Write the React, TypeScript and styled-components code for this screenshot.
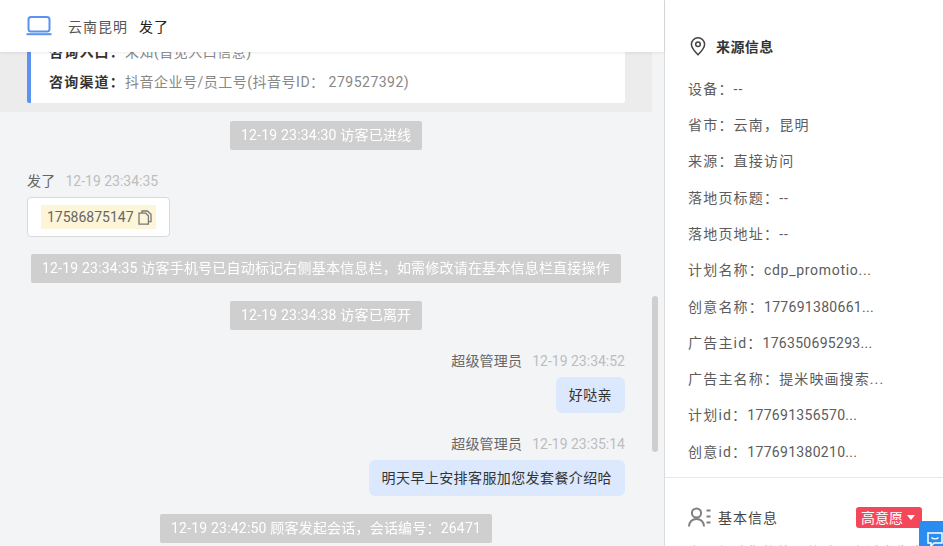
import { createGlobalStyle, styled } from "styled-components";

const GlobalStyle = createGlobalStyle`
  html, body {
    margin: 0;
    height: 100%;
    overflow: hidden;
  }
  body {
    font-family: Roboto, "Noto Sans CJK SC", sans-serif;
    font-size: 14px;
    color: #333;
    background: #fff;
  }
`;

const sourceRows = [
  { label: "设备：", value: "--", spacing: 1 },
  { label: "省市：", value: "云南，昆明", spacing: 1.2 },
  { label: "来源：", value: "直接访问", spacing: 1.2 },
  { label: "落地页标题：", value: "--", spacing: 1 },
  { label: "落地页地址：", value: "--", spacing: 1 },
  { label: "计划名称：", value: "cdp_promotio...", spacing: 0.7 },
  { label: "创意名称：", value: "177691380661...", spacing: 0.3 },
  { label: "广告主id：", value: "176350695293...", spacing: 0.3 },
  { label: "广告主名称：", value: "提米映画搜索...", spacing: 1.1 },
  { label: "计划id：", value: "177691356570...", spacing: 0.3 },
  { label: "创意id：", value: "177691380210...", spacing: 0.3 },
];

export default function App() {
  return (
    <>
      <GlobalStyle />
      <Page>
        <ChatColumn>
          <ChatHeader>
            <svg width="26" height="20" viewBox="0 0 26 20" fill="none">
              <rect x="2.5" y="1" width="21" height="14.5" rx="2.5" stroke="#5b93ee" strokeWidth="2" />
              <rect x="0.5" y="17.2" width="25" height="2" fill="#5b93ee" />
            </svg>
            <HeaderLocation>云南昆明</HeaderLocation>
            <HeaderName>发了</HeaderName>
          </ChatHeader>
          <ChatScroll>
            <NoticeBand>
              <NoticeCard>
                <NoticeLine>
                  <b>咨询入口：</b>未知(首见入口信息)
                </NoticeLine>
                <NoticeLine>
                  <b>咨询渠道：</b>抖音企业号/员工号(抖音号ID： 279527392)
                </NoticeLine>
              </NoticeCard>
            </NoticeBand>
            <Messages>
              <SystemNote>12-19 23:34:30 访客已进线</SystemNote>
              <MessageGroup $top={21}>
                <MessageMeta>
                  发了<MetaTime>12-19 23:34:35</MetaTime>
                </MessageMeta>
                <PhoneCard>
                  <PhoneMark>
                    17586875147
                    <svg width="14" height="15" viewBox="0 0 14 15" fill="none" stroke="#777" strokeWidth="1.3">
                      <path d="M1 3.2h6.8l2.6 2.6v8.4H1z" />
                      <path d="M4 3V1h5.4L13 4.4V11.6h-2.4" />
                    </svg>
                  </PhoneMark>
                </PhoneCard>
              </MessageGroup>
              <SystemNote $top={17}>12-19 23:34:35 访客手机号已自动标记右侧基本信息栏，如需修改请在基本信息栏直接操作</SystemNote>
              <SystemNote $top={18}>12-19 23:34:38 访客已离开</SystemNote>
              <MessageGroup $top={21} $own>
                <MessageMeta>
                  超级管理员<MetaTime>12-19 23:34:52</MetaTime>
                </MessageMeta>
                <Bubble>好哒亲</Bubble>
              </MessageGroup>
              <MessageGroup $top={21} $own>
                <MessageMeta>
                  超级管理员<MetaTime>12-19 23:35:14</MetaTime>
                </MessageMeta>
                <Bubble>明天早上安排客服加您发套餐介绍哈</Bubble>
              </MessageGroup>
              <SystemNote $top={18}>12-19 23:42:50 顾客发起会话，会话编号：26471</SystemNote>
            </Messages>
            <ScrollThumb />
          </ChatScroll>
        </ChatColumn>
        <SidePanel>
          <SourceSection>
            <SourceTitle>
              <svg width="16" height="19" viewBox="0 0 16 19" fill="none" stroke="#444" strokeWidth="1.5">
                <path d="M8 17.8C4 13.6 1.4 10.6 1.4 7.4a6.6 6.6 0 0 1 13.2 0c0 3.2-2.6 6.2-6.6 10.4z" />
                <circle cx="8" cy="7.3" r="2.3" />
              </svg>
              来源信息
            </SourceTitle>
            {sourceRows.map((row) => (
              <SourceRow key={row.label}>
                <RowLabel>{row.label}</RowLabel>
                <RowValue $spacing={row.spacing}>{row.value}</RowValue>
              </SourceRow>
            ))}
          </SourceSection>
          <BasicSection>
            <BasicHeader>
              <svg width="24" height="20" viewBox="0 0 24 20" fill="none" stroke="#808080" strokeWidth="2">
                <circle cx="8.5" cy="6" r="4.6" />
                <path d="M1 19.5c0-4.6 3.2-7.6 7.5-7.6s7.5 3 7.5 7.6" />
                <path d="M18.5 3.5h4M18.5 9.5h4M18.5 15.5h4" />
              </svg>
              <BasicTitle>基本信息</BasicTitle>
              <IntentTag>
                高意愿
                <TagCaret />
              </IntentTag>
            </BasicHeader>
            <BasicHint>为了保障您的使用体验，会话发生当日</BasicHint>
          </BasicSection>
          <FloatButton>
            <svg width="16" height="15" viewBox="0 0 16 15" fill="none" stroke="#fff" strokeWidth="1.5">
              <path d="M1 1h14v10H7l-3 3v-3H1z" />
              <path d="M4.5 5.5c2 1.8 5 1.8 7 0" />
            </svg>
          </FloatButton>
        </SidePanel>
      </Page>
    </>
  );
}

const Page = styled.div`
  display: flex;
  width: 943px;
  height: 546px;
  overflow: hidden;
`;

const ChatColumn = styled.div`
  display: flex;
  flex-direction: column;
  width: 664px;
  flex: none;
  background: #f3f4f6;
`;

const ChatHeader = styled.div`
  position: relative;
  z-index: 2;
  display: flex;
  align-items: center;
  flex: none;
  height: 52px;
  padding-left: 26px;
  box-sizing: border-box;
  background: #fff;
  box-shadow: 0 1px 3px rgba(0, 0, 0, 0.08);
`;

const HeaderLocation = styled.span`
  margin-left: 16px;
  color: #555;
  letter-spacing: 1px;
`;

const HeaderName = styled.span`
  margin-left: 11px;
  color: #222;
  letter-spacing: 1px;
`;

const ChatScroll = styled.div`
  position: relative;
  flex: 1;
  min-height: 0;
  overflow: hidden;
`;

const NoticeBand = styled.div`
  width: 625px;
  margin-top: -15px;
  padding: 0 0 9px 27px;
  background: #ececec;
`;

const NoticeCard = styled.div`
  width: 598px;
  box-sizing: border-box;
  padding: 0 18px 6px;
  border-left: 4px solid #5b93ee;
  border-radius: 2px;
  background: #fff;
`;

const NoticeLine = styled.div`
  line-height: 30px;
  color: #888;
  letter-spacing: 0.5px;

  b {
    color: #333;
    font-weight: 700;
    letter-spacing: 1.2px;
  }
`;

const Messages = styled.div`
  display: flex;
  flex-direction: column;
  align-items: flex-start;
  width: 598px;
  margin-left: 27px;
  padding-top: 9px;
`;

const SystemNote = styled.div<{ $top?: number }>`
  align-self: center;
  margin-top: ${(props) => props.$top ?? 0}px;
  padding: 0 11px;
  border-radius: 2px;
  background: #cfcfcf;
  color: #fff;
  line-height: 29px;
  letter-spacing: 0.2px;
  white-space: nowrap;
  will-change: transform;
`;

const MessageGroup = styled.div<{ $top?: number; $own?: boolean }>`
  display: flex;
  flex-direction: column;
  align-items: ${(props) => (props.$own ? "flex-end" : "flex-start")};
  align-self: ${(props) => (props.$own ? "flex-end" : "flex-start")};
  margin-top: ${(props) => props.$top ?? 0}px;
`;

const MessageMeta = styled.div`
  color: #666;
  line-height: 20px;
  letter-spacing: 0.2px;
`;

const MetaTime = styled.span`
  margin-left: 10px;
  color: #bdbdbd;
  letter-spacing: 0;
`;

const PhoneCard = styled.div`
  margin-top: 6px;
  padding: 7px 13px;
  border: 1px solid #d9d9d9;
  border-radius: 4px;
  background: #fff;
`;

const PhoneMark = styled.div`
  display: flex;
  align-items: center;
  gap: 4px;
  height: 24px;
  padding: 0 4px 0 6px;
  background: #fdf5d8;
  color: #666;
`;

const Bubble = styled.div`
  margin-top: 6px;
  padding: 0 13px;
  border-radius: 6px;
  background: #dce8fd;
  color: #333;
  line-height: 36px;
  letter-spacing: 0.4px;
`;

const ScrollThumb = styled.div`
  position: absolute;
  top: 244px;
  left: 652px;
  width: 6px;
  height: 156px;
  border-radius: 3px;
  background: #cfcfcf;
`;

const SidePanel = styled.div`
  position: relative;
  flex: 1;
  min-width: 0;
  border-left: 1px solid #dcdcdc;
  background: #fff;
`;

const SourceSection = styled.div`
  padding: 36px 0 7.2px 23px;
  border-bottom: 1px solid #e8e8e8;
`;

const SourceTitle = styled.div`
  display: flex;
  align-items: center;
  gap: 10px;
  margin: 0 0 14.8px 2px;
  height: 20px;
  font-weight: 700;
  color: #333;
  letter-spacing: 0.4px;
`;

const SourceRow = styled.div`
  color: #5c5c5c;
  line-height: 36.3px;
  white-space: nowrap;
`;

const RowLabel = styled.span`
  letter-spacing: 1.2px;
`;

const RowValue = styled.span<{ $spacing: number }>`
  letter-spacing: ${(props) => props.$spacing}px;
`;

const BasicSection = styled.div`
  padding: 27px 21px 0 23px;
`;

const BasicHeader = styled.div`
  display: flex;
  align-items: center;
  height: 24px;
`;

const BasicTitle = styled.span`
  flex: 1;
  margin-left: 6px;
  color: #444;
  letter-spacing: 1px;
`;

const IntentTag = styled.span`
  display: flex;
  align-items: center;
  gap: 4px;
  height: 21px;
  padding: 0 7px 0 5px;
  border-radius: 3px;
  background: #f5475a;
  color: #fff;
`;

const TagCaret = styled.i`
  width: 0;
  height: 0;
  border: 4px solid transparent;
  border-top: 5px solid #fff;
  border-bottom: 0;
`;

const BasicHint = styled.div`
  margin-top: 11.5px;
  color: #bbb;
  letter-spacing: 0.8px;
  white-space: nowrap;
`;

const FloatButton = styled.div`
  position: absolute;
  left: 254px;
  top: 521px;
  display: flex;
  padding: 11px 0 0 8px;
  width: 24px;
  height: 25px;
  box-sizing: border-box;
  border-radius: 4px 0 0 0;
  background: #2b8cf0;
  overflow: hidden;
`;
